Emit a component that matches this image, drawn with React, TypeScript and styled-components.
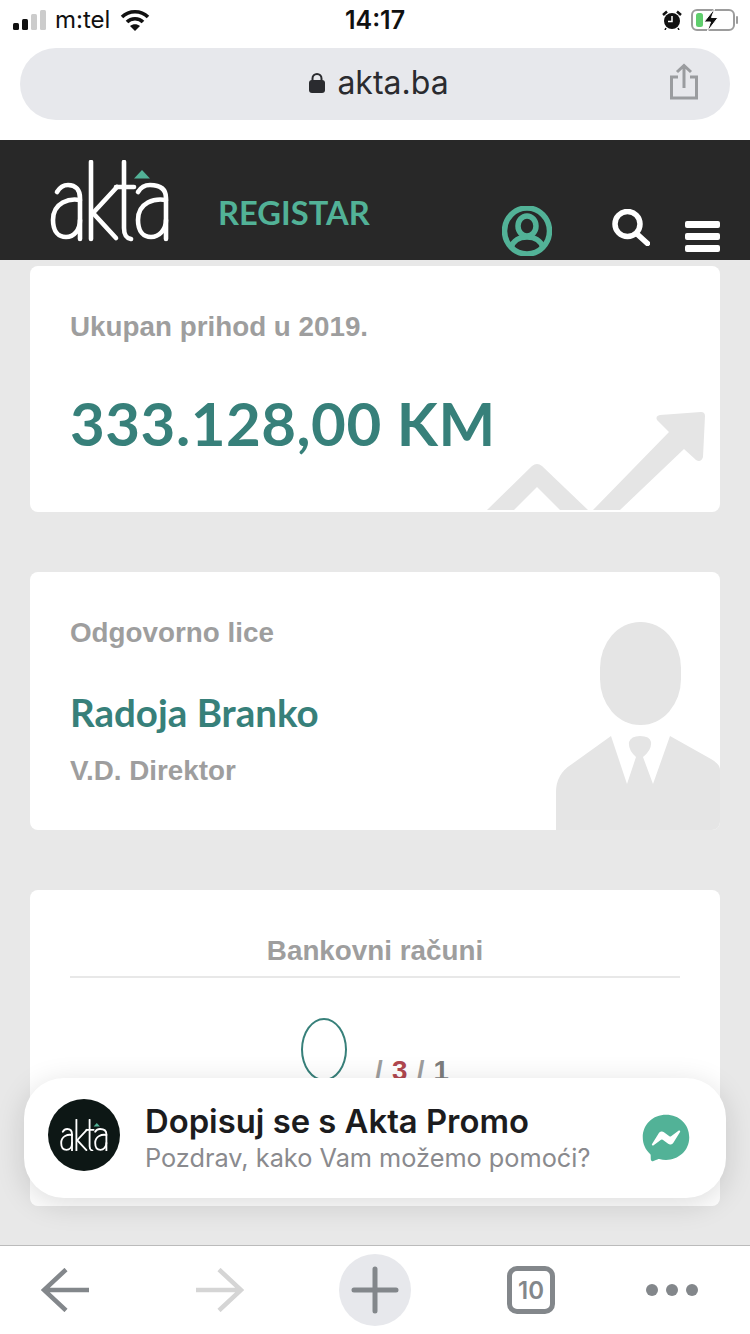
import React from "react";
import styled, { createGlobalStyle } from "styled-components";
import { FaFacebookMessenger } from "react-icons/fa";

const GlobalStyle = createGlobalStyle`
  html, body {
    margin: 0;
    padding: 0;
    background: #fff;
  }
  * {
    box-sizing: border-box;
  }
`;

const SYSTEM_FONT = `Inter, "Liberation Sans", sans-serif`;
const LABEL_FONT = `"Liberation Sans", Arial, sans-serif`;
const BRAND_GREEN = "#52b297";
const TEAL = "#37807a";
const MUTED = "#9e9e9e";

const AktaLogo = ({ width }: { width: number }) => (
  <svg width={width} viewBox="0 0 120 82" fill="none" style={{ display: "block" }}>
    <g stroke="#fff" strokeWidth="4.600" strokeLinecap="round">
      <path d="M7 32C10 27 14 25 18 25C26 25 30 30 30 38V79" />
      <path d="M30 40C20 38 3 42 3 60C3 72 9 77 16 77C24 77 30 70 30 60" />
      <path d="M41 2V79" />
      <path d="M67 27L43 53L66 78" />
      <path d="M74 2V68C74 75 76 78 81 79" />
      <path d="M66 27H84" />
      <path d="M88 32C91 27 95 25 100 25C111 25 116 30 116 38V79" />
      <path d="M116 40C105 38 88 42 88 60C88 72 94 77 101 77C109 77 116 70 116 60" />
    </g>
    <path d="M92 10L84 18.500H100Z" fill={BRAND_GREEN} />
  </svg>
);

const App = () => {
  return (
    <Screen>
      <GlobalStyle />
      <BrowserTop>
        <StatusBar>
          <StatusSide>
            <SignalIcon />
            <Carrier>m:tel</Carrier>
            <WifiIcon />
          </StatusSide>
          <Clock>14:17</Clock>
          <StatusRight>
            <AlarmIcon />
            <BatteryIcon />
          </StatusRight>
        </StatusBar>
        <UrlBar>
          <UrlText>
            <svg width="16" height="20" viewBox="0 0 16 20">
              <path d="M3.500 8V5.500a4.500 4.500 0 0 1 9 0V8" fill="none" stroke="#2a2b2f" strokeWidth="2" />
              <rect y="7" width="16" height="13" rx="3" fill="#2a2b2f" />
            </svg>
            akta.ba
          </UrlText>
          <ShareButton>
            <svg width="30" height="37" viewBox="0 0 30 37" fill="none" stroke="#9a9c9f" strokeWidth="3">
              <path d="M9 14H2.500V35H27.500V14H21" />
              <path d="M15 25V2.500M8 9L15 2.500L22 9" />
            </svg>
          </ShareButton>
        </UrlBar>
      </BrowserTop>

      <SiteHeader>
        <LogoSlot>
          <AktaLogo width={120} />
        </LogoSlot>
        <RegisterLabel>REGISTAR</RegisterLabel>
        <HeaderActions>
          <svg width="50" height="50" viewBox="0 0 50 50" fill="none" stroke={BRAND_GREEN} strokeWidth="5.500">
            <ellipse cx="25" cy="25" rx="22.500" ry="23" />
            <ellipse cx="25" cy="20" rx="9" ry="10" />
            <path d="M9 42C11 34 18 31 25 31C32 31 39 34 41 42" />
          </svg>
          <SearchSlot>
            <svg width="38" height="37" viewBox="0 0 38 37" fill="none" stroke="#fff">
              <circle cx="15.500" cy="15" r="12.500" strokeWidth="5.500" />
              <path d="M25 25L35.500 34.500" strokeWidth="5.500" strokeLinecap="round" />
            </svg>
          </SearchSlot>
          <Burger>
            <span />
            <span />
            <span />
          </Burger>
        </HeaderActions>
      </SiteHeader>

      <Content>
        <Card $height={246}>
          <CardLabel>Ukupan prihod u 2019.</CardLabel>
          <Amount>333.128,00 KM</Amount>
          <ChartArt width="219" height="100" viewBox="0 0 219 100">
            <path
              d="M0 98L45 54Q50 50 55 54L101 98H73L50 75L27 98Z"
              fill="#e5e5e5"
            />
            <path
              d="M106 98L182 20L170 8Q168 4 173 3L214 0Q218 0 218 4L216 45Q214 51 209 48L197 37L133 98Z"
              fill="#e5e5e5"
            />
          </ChartArt>
        </Card>

        <Card $height={258}>
          <CardLabel>Odgovorno lice</CardLabel>
          <PersonName>Radoja Branko</PersonName>
          <PersonRole>V.D. Direktor</PersonRole>
          <PersonArt width="164" height="208" viewBox="0 0 164 208">
            <rect x="44" y="0" width="81" height="103" rx="40" ry="46" fill="#e5e5e5" />
            <path
              d="M0 208V170Q0 152 16 142L55 114L71 162L80 135Q72 128 73 120Q75 114 84 114Q94 114 95 120Q96 128 87 135L97 162L114 114L155 137Q164 142 164 148V208Z"
              fill="#e5e5e5"
            />
          </PersonArt>
        </Card>

        <Card $height={316}>
          <AccountsTitle>Bankovni računi</AccountsTitle>
          <AccountsRow>
            <Gauge />
            <AccountCounts>
              / <BadCount>3</BadCount> / <DarkCount>1</DarkCount>
            </AccountCounts>
          </AccountsRow>
        </Card>
      </Content>

      <ChatPrompt>
        <ChatAvatar>
          <AktaLogo width={48} />
        </ChatAvatar>
        <ChatText>
          <ChatTitle>Dopisuj se s Akta Promo</ChatTitle>
          <ChatSubtitle>Pozdrav, kako Vam možemo pomoći?</ChatSubtitle>
        </ChatText>
        <FaFacebookMessenger size={48} color={BRAND_GREEN} />
      </ChatPrompt>

      <BrowserToolbar>
        <ToolSlot>
          <svg width="48" height="44" viewBox="0 0 48 44" fill="none" stroke="#83878b" strokeWidth="4.500">
            <path d="M48 22H3M25 1.500L3 22L25 42.500" />
          </svg>
        </ToolSlot>
        <ToolSlot>
          <svg width="48" height="44" viewBox="0 0 48 44" fill="none" stroke="#d5d5d5" strokeWidth="4.500">
            <path d="M0 22H45M23 1.500L45 22L23 42.500" />
          </svg>
        </ToolSlot>
        <NewTabButton>
          <svg width="48" height="48" viewBox="0 0 48 48" stroke="#83878b" strokeWidth="5" strokeLinecap="round">
            <path d="M24 3V45M3 24H45" />
          </svg>
        </NewTabButton>
        <ToolSlot>
          <TabCount>10</TabCount>
        </ToolSlot>
        <ToolSlot>
          <MoreDots>
            <span />
            <span />
            <span />
          </MoreDots>
        </ToolSlot>
      </BrowserToolbar>
    </Screen>
  );
};

const SignalIcon = () => (
  <svg width="33" height="20" viewBox="0 0 33 20">
    <rect x="0" y="13" width="6" height="7" rx="1.500" fill="#111" />
    <rect x="9" y="9" width="6" height="11" rx="1.500" fill="#111" />
    <rect x="18" y="4" width="6" height="16" rx="1.500" fill="#ccc" />
    <rect x="27" y="0" width="6" height="20" rx="1.500" fill="#ccc" />
  </svg>
);

const WifiIcon = () => (
  <svg width="30" height="22" viewBox="0 0 30 22" fill="none" stroke="#111" strokeWidth="3.500">
    <path d="M2 8C9 1 21 1 28 8" />
    <path d="M7 13C11 8.500 19 8.500 23 13" />
    <path d="M15 22L10 17C13 14.500 17 14.500 20 17Z" fill="#111" stroke="none" />
  </svg>
);

const AlarmIcon = () => (
  <svg width="20" height="20" viewBox="0 0 20 20">
    <circle cx="10" cy="11" r="8" fill="#111" />
    <path d="M10 6V11.500H6" fill="none" stroke="#fff" strokeWidth="1.500" />
    <path d="M1 5L5 1.500M19 5L15 1.500" stroke="#111" strokeWidth="2.500" />
    <path d="M4 18L3 20M16 18L17 20" stroke="#111" strokeWidth="1.500" />
  </svg>
);

const BatteryIcon = () => (
  <svg width="48" height="24" viewBox="0 0 48 24">
    <rect x="1" y="2" width="42" height="20" rx="5" fill="#fff" stroke="#9c9c9c" strokeWidth="2" />
    <rect x="5" y="5" width="7" height="14" rx="2.500" fill="#5fce6d" />
    <rect x="45" y="8" width="2" height="8" rx="1" fill="#9c9c9c" />
    <path d="M24 0L13 14H19.500L16 24L27 9.500H20.500Z" fill="#111" stroke="#fff" strokeWidth="1" />
  </svg>
);

export default App;

const Screen = styled.div`
  position: relative;
  display: flex;
  flex-direction: column;
  width: 750px;
  height: 1334px;
  overflow: hidden;
  background: #e8e8e8;
  font-family: ${SYSTEM_FONT};
`;

const BrowserTop = styled.div`
  height: 140px;
  padding: 0 20px;
  background: #fff;
`;

const StatusBar = styled.div`
  display: grid;
  grid-template-columns: 1fr auto 1fr;
  align-items: center;
  height: 48px;
  margin: 0 -7px;
  padding-bottom: 8px;
  color: #111;
`;

const StatusSide = styled.div`
  display: flex;
  align-items: center;
  gap: 9px;
`;

const StatusRight = styled(StatusSide)`
  justify-content: flex-end;
  gap: 9px;
  margin-right: -2px;
`;

const Carrier = styled.span`
  margin-right: 1px;
  font-size: 24px;
  line-height: 1;
`;

const Clock = styled.span`
  font-size: 25px;
  font-weight: 600;
  line-height: 1;
`;

const UrlBar = styled.div`
  position: relative;
  display: flex;
  align-items: center;
  justify-content: center;
  height: 72px;
  padding: 0 0 3px 8px;
  border-radius: 36px;
  background: #e7e8ec;
`;

const UrlText = styled.div`
  display: flex;
  align-items: center;
  gap: 12px;
  font-size: 32px;
  color: #2a2b2f;
`;

const ShareButton = styled.div`
  position: absolute;
  top: 15px;
  right: 31px;
  line-height: 0;
`;

const SiteHeader = styled.header`
  display: flex;
  flex-shrink: 0;
  height: 120px;
  padding: 20px 30px 0 50px;
  background: #282828;
`;

const LogoSlot = styled.div`
  width: 120px;
`;

const RegisterLabel = styled.div`
  margin: 37px 0 0 48px;
  font-family: Lato, sans-serif;
  font-size: 32.700px;
  font-weight: 700;
  line-height: 32px;
  color: ${BRAND_GREEN};
`;

const HeaderActions = styled.div`
  display: flex;
  align-items: flex-start;
  margin-left: auto;
  padding-top: 46px;
`;

const SearchSlot = styled.div`
  margin: 3px 35px 0 60px;
  line-height: 0;
`;

const Burger = styled.div`
  display: flex;
  flex-direction: column;
  gap: 5.500px;
  width: 35px;
  padding-top: 15px;

  span {
    display: block;
    height: 6.500px;
    border-radius: 2px;
    background: #fff;
  }
`;

const Content = styled.main`
  display: flex;
  flex: 1;
  flex-direction: column;
  gap: 60px;
  min-height: 0;
  padding: 6px 30px 0;
`;

const Card = styled.section<{ $height: number }>`
  position: relative;
  flex-shrink: 0;
  height: ${(p) => p.$height}px;
  padding: 45px 40px 0;
  overflow: hidden;
  border-radius: 8px;
  background: #fff;
`;

const CardLabel = styled.h3`
  margin: 0;
  font-family: ${LABEL_FONT};
  font-size: 27.800px;
  font-weight: 700;
  line-height: 32px;
  color: ${MUTED};
`;

const Amount = styled.div`
  margin-top: 45px;
  font-family: Lato, sans-serif;
  font-size: 60px;
  font-weight: 700;
  letter-spacing: 0.500px;
  line-height: 70px;
  color: ${TEAL};
`;

const ChartArt = styled.svg`
  position: absolute;
  right: 14px;
  bottom: 0;
`;

const PersonArt = styled.svg`
  position: absolute;
  right: 0;
  bottom: 0;
`;

const PersonName = styled.div`
  margin-top: 40px;
  font-family: Lato, sans-serif;
  font-size: 38.500px;
  font-weight: 700;
  line-height: 46px;
  color: ${TEAL};
`;

const PersonRole = styled(CardLabel)`
  margin-top: 20px;
`;

const AccountsTitle = styled(CardLabel)`
  padding-bottom: 9px;
  border-bottom: 2px solid #e8e8e8;
  text-align: center;
`;

const AccountsRow = styled.div`
  display: flex;
  align-items: flex-end;
  margin-top: 40px;
  padding-left: 231px;
`;

const Gauge = styled.div`
  flex-shrink: 0;
  width: 46px;
  height: 63px;
  border: 2px solid ${TEAL};
  border-radius: 50%;
`;

const AccountCounts = styled.div`
  margin: 0 0 -6px 28px;
  font-family: ${LABEL_FONT};
  font-size: 27.800px;
  font-weight: 700;
  line-height: 32px;
  word-spacing: 1.500px;
  color: ${MUTED};
`;

const BadCount = styled.span`
  color: #b0474f;
`;

const DarkCount = styled.span`
  color: #7d7d7d;
`;

const ChatPrompt = styled.aside`
  position: absolute;
  top: 1078px;
  left: 24px;
  display: flex;
  align-items: center;
  width: 702px;
  height: 120px;
  padding: 0 36px 0 24px;
  border-radius: 40px;
  background: #fff;
  box-shadow: 0 6px 30px rgba(0, 0, 0, 0.14);
`;

const ChatAvatar = styled.div`
  display: flex;
  flex-shrink: 0;
  align-items: center;
  justify-content: center;
  width: 72px;
  height: 72px;
  margin-bottom: 6px;
  border-radius: 50%;
  background: #0d1715;
`;

const ChatText = styled.div`
  flex: 1;
  margin-left: 25px;
`;

const ChatTitle = styled.div`
  font-size: 32.800px;
  font-weight: 600;
  line-height: 38px;
  color: #1c1c1e;
`;

const ChatSubtitle = styled.div`
  margin-top: 2px;
  font-size: 25.300px;
  line-height: 32px;
  color: #8a8a8e;
`;

const BrowserToolbar = styled.nav`
  display: grid;
  flex-shrink: 0;
  grid-template-columns: 155px 143px 168px 139px auto;
  align-items: center;
  justify-items: start;
  height: 89px;
  padding-left: 41px;
  border-top: 1px solid #bbb;
  background: #fff;
`;

const ToolSlot = styled.div`
  display: flex;
  align-items: center;
  justify-content: center;
`;

const NewTabButton = styled(ToolSlot)`
  width: 72px;
  height: 72px;
  border-radius: 50%;
  background: #e7e8ec;
`;

const TabCount = styled.div`
  display: flex;
  align-items: center;
  justify-content: center;
  width: 48px;
  height: 48px;
  border: 5px solid #83878b;
  border-radius: 10px;
  font-size: 24px;
  font-weight: 600;
  color: #83878b;
`;

const MoreDots = styled.div`
  display: flex;
  gap: 8px;

  span {
    width: 12px;
    height: 12px;
    border-radius: 50%;
    background: #83878b;
  }
`;
